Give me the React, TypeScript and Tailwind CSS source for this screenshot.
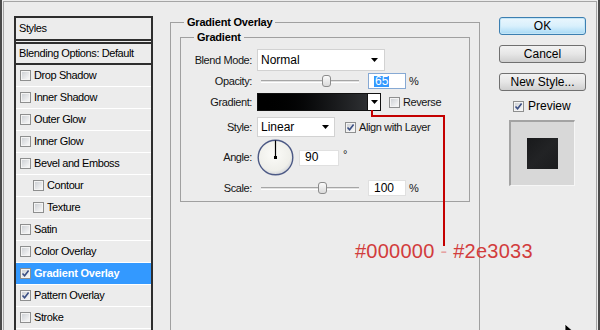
import React from "react";

const styleRows = [
  { label: "Drop Shadow" },
  { label: "Inner Shadow" },
  { label: "Outer Glow" },
  { label: "Inner Glow" },
  { label: "Bevel and Emboss" },
  { label: "Contour", sub: true },
  { label: "Texture", sub: true },
  { label: "Satin" },
  { label: "Color Overlay" },
  { label: "Gradient Overlay", on: true, active: true },
  { label: "Pattern Overlay", on: true },
  { label: "Stroke" },
];

function Check({ on = false }: { on?: boolean }) {
  return (
    <span className="flex h-[11px] w-[11px] shrink-0 items-center justify-center border border-[#8e8f8f] bg-[#f4f4f4] p-px">
      <span className="relative flex h-full w-full items-center justify-center bg-linear-to-br from-[#cfd2d6] to-[#f7f7f7]">
        {on && (
          <svg width="9" height="9" viewBox="0 0 9 9" className="absolute">
            <path d="M1.5 4.5 L3.6 6.8 L7.6 1.6" fill="none" stroke="#3b4f84" strokeWidth="1.6" />
          </svg>
        )}
      </span>
    </span>
  );
}

function Arrow() {
  return (
    <svg width="7" height="4" viewBox="0 0 7 4">
      <polygon points="0,0 7,0 3.5,4" fill="#000" />
    </svg>
  );
}

function Slider({ thumb }: { thumb: number }) {
  return (
    <div className="relative ml-[9px] flex h-[12px] w-[98px] items-center">
      <div className="h-[3px] w-full border-t border-[#a6a6a6] border-b border-b-white bg-[#e2e2e2]" />
      <div
        className="absolute top-0 h-[12px] w-[9px] rounded-[3px] border border-[#8c8c8c] bg-linear-to-b from-[#fbfbfb] to-[#dadada]"
        style={{ left: thumb }}
      />
    </div>
  );
}

function Label({ children }: { children: React.ReactNode }) {
  return <span className="w-[71px] shrink-0 text-right">{children}</span>;
}

export default function App() {
  return (
    <div className="relative h-[330px] w-[600px] overflow-hidden border-x-2 border-[#4a4a4a] bg-[#ececec] font-['Liberation_Sans',Arial,sans-serif] text-[11px] leading-[13px] tracking-[-0.4px] text-[#151515]">
      <div className="mx-px mt-px flex h-[340px] items-start border-x border-t border-[#a5a5a5]">
        {/* styles list */}
        <div className="ml-[10px] mt-[14px] h-[330px] w-[139px] shrink-0 overflow-hidden border-x-2 border-t-2 border-[#2e2e2e]">
          <div className="flex h-[23px] items-center border-b-2 border-[#2e2e2e] pl-[3px] text-black">Styles</div>
          <div className="h-px" />
          <div className="flex h-[23px] items-center border-y-2 border-[#2e2e2e] pl-[3px] text-black">
            Blending Options: Default
          </div>
          {styleRows.map((r) => (
            <div
              key={r.label}
              className={`flex h-[22px] items-center gap-[3px] border-b border-white ${r.sub ? "pl-[17px]" : "pl-[4px]"} ${
                r.active ? "bg-[#3399ff] font-bold tracking-[-0.2px] text-white" : "text-black"
              }`}
            >
              <Check on={r.on} />
              <span>{r.label}</span>
            </div>
          ))}
        </div>

        {/* gradient overlay group */}
        <fieldset className="ml-[17px] mt-[14px] h-[400px] w-[310px] shrink-0 border border-[#a0a0a0]">
          <legend className="ml-[13px] px-[3px] font-bold leading-[12px] tracking-[-0.2px] text-black">Gradient Overlay</legend>
          <fieldset className="ml-[9px] mt-[3px] w-[290px] border border-[#a0a0a0] pb-[5px]">
            <legend className="ml-[13px] px-[3px] font-bold leading-[12px] tracking-[-0.2px] text-black">Gradient</legend>

            <div className="mt-[6px] flex h-[22px] items-center">
              <Label>Blend Mode:</Label>
              <div className="ml-[5px] flex h-[22px] w-[128px] items-center justify-between border border-[#d2d2d2] bg-white pl-[3px] pr-[6px] text-[12px] tracking-normal text-black">
                <span>Normal</span>
                <Arrow />
              </div>
            </div>

            <div className="mt-[2px] flex h-[16px] items-center">
              <Label>Opacity:</Label>
              <Slider thumb={61} />
              <div className="ml-[9px] flex h-[16px] w-[38px] items-center border border-[#86a9d4] bg-white pl-[5px]">
                <span className="bg-[#3399ff] px-px text-[12px] leading-[11px] tracking-normal text-white">65</span>
              </div>
              <span className="ml-[3px]">%</span>
            </div>

            <div className="mt-[4px] flex h-[18px] items-center">
              <Label>Gradient:</Label>
              <div className="ml-[5px] flex h-[18px] border border-[#111]">
                <div className="w-[110px] border-r border-[#111] bg-linear-to-r from-black to-[#2e3033]" />
                <div className="flex w-[12px] items-center justify-center bg-white">
                  <Arrow />
                </div>
              </div>
              <span className="ml-[8px]">
                <Check />
              </span>
              <span className="ml-[3px]">Reverse</span>
            </div>

            <div className="mt-[6px] flex h-[20px] items-center">
              <Label>Style:</Label>
              <div className="ml-[5px] flex h-[20px] w-[78px] items-center justify-between border border-[#d2d2d2] bg-white pl-[3px] pr-[5px] text-[12px] tracking-normal text-black">
                <span>Linear</span>
                <Arrow />
              </div>
              <span className="ml-[10px]">
                <Check on />
              </span>
              <span className="ml-[3px]">Align with Layer</span>
            </div>

            <div className="mt-[2px] flex h-[37px] items-center">
              <Label>Angle:</Label>
              <svg width="37" height="37" viewBox="0 0 37 37" className="ml-[5px]">
                <defs>
                  <radialGradient id="dial" cx="0.45" cy="0.4" r="0.6">
                    <stop offset="0" stopColor="#fbfbf8" />
                    <stop offset="0.8" stopColor="#efefea" />
                    <stop offset="1" stopColor="#d6d8dc" />
                  </radialGradient>
                </defs>
                <circle cx="18.5" cy="18.5" r="17.3" fill="url(#dial)" stroke="#4d5a86" strokeWidth="1.4" />
                <line x1="18.5" y1="18.5" x2="18.5" y2="1.5" stroke="#000" strokeWidth="1.2" />
                <rect x="17" y="17" width="3" height="3" fill="#000" />
              </svg>
              <div className="ml-[5px] flex h-[16px] w-[40px] items-center border border-[#e0e0e0] bg-white pl-[5px] text-[12px] tracking-normal text-black">
                90
              </div>
              <span className="ml-[4px] -mt-[6px]">°</span>
            </div>

            <div className="mt-[4px] flex h-[16px] items-center">
              <Label>Scale:</Label>
              <Slider thumb={57} />
              <div className="ml-[9px] flex h-[16px] w-[38px] items-center border border-[#e0e0e0] bg-white pl-[5px] text-[12px] tracking-normal text-black">
                100
              </div>
              <span className="ml-[3px]">%</span>
            </div>
          </fieldset>
        </fieldset>

        {/* buttons */}
        <div className="ml-[19px] mt-[15px] flex w-[87px] shrink-0 flex-col text-[12px] tracking-normal text-black">
          <button className="flex h-[18px] items-center justify-center rounded-[3px] border border-[#3c7fb1] bg-linear-to-b from-[#eaf6fd] via-[#d9f0fc] to-[#a7d9f5] shadow-[inset_0_0_0_1px_#c4e5f6]">
            OK
          </button>
          <button className="mt-[10px] flex h-[18px] items-center justify-center rounded-[3px] border border-[#707070] bg-linear-to-b from-[#f2f2f2] via-[#e6e6e6] to-[#cfcfcf]">
            Cancel
          </button>
          <button className="mt-[10px] flex h-[18px] items-center justify-center rounded-[3px] border border-[#707070] bg-linear-to-b from-[#f2f2f2] via-[#e6e6e6] to-[#cfcfcf]">
            New Style...
          </button>
          <div className="ml-[14px] mt-[8px] flex h-[14px] items-center gap-[4px]">
            <Check on />
            <span>Preview</span>
          </div>
          <div className="ml-[10px] mt-[7px] flex h-[66px] w-[66px] items-center justify-center border-l-2 border-t-2 border-[#a3a3a3] border-b border-r border-b-[#f6f6f6] border-r-[#f6f6f6] bg-[#d8d8d8]">
            <div className="h-[31px] w-[31px] bg-linear-to-br from-[#18191b] via-[#222325] to-[#1b1c1e]" />
          </div>
        </div>
      </div>

      {/* annotation */}
      <svg className="pointer-events-none absolute left-[-2px] top-0" width="600" height="330">
        <polyline points="372,110 372,116 444,116 444,246" fill="none" stroke="#c40000" strokeWidth="2" />
        <path d="M565 324 L565 336 L568 333 L571 339 L573 338 L570 332 L574 332 Z" fill="#000" stroke="#fff" strokeWidth="0.8" />
      </svg>
      <div className="absolute left-[353px] top-[241px] whitespace-nowrap text-[20px] leading-[20px] tracking-[0.25px] text-[#d23c3c]">
        #000000 <span className="text-[#e6a3a3]">-</span> #2e3033
      </div>
    </div>
  );
}
